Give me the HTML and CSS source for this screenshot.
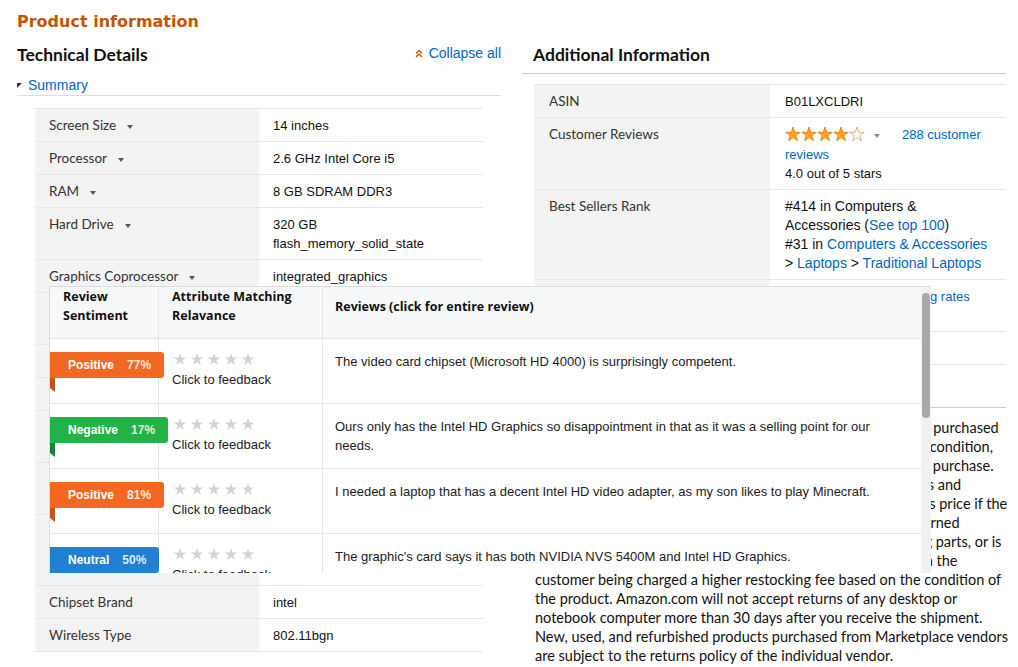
FILE: index.html
```html
<!DOCTYPE html>
<html lang="en">
<head>
<meta charset="utf-8">
<title>Product information</title>
<link rel="stylesheet" href="styles.css">
</head>
<body>
<svg class="defs" width="0" height="0" aria-hidden="true">
  <defs>
    <symbol id="star" viewBox="0 0 16 16">
      <path d="M8 1 L9.7 6.25 L15.23 6.25 L10.76 9.5 L12.47 14.75 L8 11.5 L3.53 14.75 L5.24 9.5 L0.77 6.25 L6.3 6.25 Z"/>
    </symbol>
  </defs>
</svg>
<div class="page">
  <h2 class="pi-title">Product information</h2>
  <div class="cols">
    <section class="col">
      <div class="sec-head">
        <h3 class="sec-title">Technical Details</h3>
        <a class="collapse" href="#"><svg class="chev" width="8" height="9" viewBox="0 0 8 9"><polyline points="1,4.5 4,1.5 7,4.5"/><polyline points="1,8 4,5 7,8"/></svg>Collapse all</a>
      </div>
      <div class="summary"><svg class="tri" width="5" height="5" viewBox="0 0 5 5"><polygon points="0,0 5,0 0,5"/></svg><a href="#">Summary</a></div>
      <table class="specs tech">
        <tr><td class="lbl">Screen Size<span class="caret"></span></td><td>14 inches</td></tr>
        <tr><td class="lbl">Processor<span class="caret"></span></td><td>2.6 GHz Intel Core i5</td></tr>
        <tr><td class="lbl">RAM<span class="caret"></span></td><td>8 GB SDRAM DDR3</td></tr>
        <tr><td class="lbl">Hard Drive<span class="caret"></span></td><td>320 GB<br>flash_memory_solid_state</td></tr>
        <tr><td class="lbl">Graphics Coprocessor<span class="caret"></span></td><td>integrated_graphics</td></tr>
        <tr><td class="lbl">Graphics Card Description</td><td>Integrated<br>Intel HD Graphics 4000</td></tr>
        <tr><td class="lbl">Graphics Card Ram Size</td><td>1 GB</td></tr>
        <tr><td class="lbl">Number of USB 3.0 Ports</td><td>2</td></tr>
        <tr><td class="lbl">Optical Drive</td><td>DVD-RW<br>Super Multi</td></tr>
        <tr><td class="lbl">Operating System</td><td>Windows 10<br>Professional 64-bit</td></tr>
        <tr class="tall"><td class="lbl">Included Components</td><td>AC adapter<br>Battery</td></tr>
        <tr><td class="lbl">Chipset Brand</td><td>intel</td></tr>
        <tr><td class="lbl">Wireless Type</td><td>802.11bgn</td></tr>
      </table>
    </section>
    <section class="col">
      <h3 class="sec-title ruled">Additional Information</h3>
      <table class="specs add">
        <tr><td class="lbl">ASIN</td><td>B01LXCLDRI</td></tr>
        <tr><td class="lbl">Customer Reviews</td><td>
          <div class="rating-line"><svg class="rating" width="80" height="16" viewBox="0 0 80 16">
            <use href="#star" x="0" y="0" width="16" height="16" class="full"/>
            <use href="#star" x="16" y="0" width="16" height="16" class="full"/>
            <use href="#star" x="32" y="0" width="16" height="16" class="full"/>
            <use href="#star" x="48" y="0" width="16" height="16" class="full"/>
            <use href="#star" x="64" y="0" width="16" height="16" class="empty"/>
          </svg><span class="caret small"></span><a class="rev-link" href="#">288 customer</a></div>
          <div><a href="#">reviews</a></div>
          <div>4.0 out of 5 stars</div>
        </td></tr>
        <tr><td class="lbl">Best Sellers Rank</td><td class="big">#414 in Computers &amp;<br>Accessories (<a href="#">See top 100</a>)<br>#31 in <a href="#">Computers &amp; Accessories</a><br>&gt; <a href="#">Laptops</a> &gt; <a href="#">Traditional Laptops</a></td></tr>
        <tr><td class="lbl">Shipping Weight</td><td>4.6 pounds (<a href="#">View shipping rates</a><br><a href="#">and policies</a>)</td></tr>
        <tr><td class="lbl">Date First Available</td><td>September 5, 2016</td></tr>
      </table>
      <h3 class="sec-title ruled warranty">Warranty &amp; Support</h3>
      <p class="policy">Amazon.com Return Policy: You may return any new computer purchased<br>from Amazon.com that is "dead on arrival," arrives in damaged condition,<br>or is still in unopened boxes, for a full refund within 30 days of purchase.<br>Amazon.com reserves the right to test "dead on arrival" returns and<br>impose a customer fee equal to 15 percent of the product sales price if the<br>customer misrepresents the condition of the product. Any returned<br>computer that is damaged through customer misuse, is missing parts, or is<br>in unsellable condition due to customer tampering will result in the<br>customer being charged a higher restocking fee based on the condition of<br>the product. Amazon.com will not accept returns of any desktop or<br>notebook computer more than 30 days after you receive the shipment.<br>New, used, and refurbished products purchased from Marketplace vendors<br>are subject to the returns policy of the individual vendor.</p>
    </section>
  </div>

  <div class="popup">
    <div class="rv">
      <div class="rv-head">
        <div class="c1">Review Sentiment</div>
        <div class="c2">Attribute Matching Relavance</div>
        <div class="c3">Reviews (click for entire review)</div>
      </div>
      <div class="rv-row">
        <div class="c1"><span class="badge pos"><b>Positive</b><i>77%</i></span></div>
        <div class="c2"><div class="fstars"><svg width="14" height="14"><use href="#star"/></svg><svg width="14" height="14"><use href="#star"/></svg><svg width="14" height="14"><use href="#star"/></svg><svg width="14" height="14"><use href="#star"/></svg><svg width="14" height="14"><use href="#star"/></svg></div><div class="fb">Click to feedback</div></div>
        <div class="c3">The video card chipset (Microsoft HD 4000) is surprisingly competent.</div>
      </div>
      <div class="rv-row">
        <div class="c1"><span class="badge neg"><b>Negative</b><i>17%</i></span></div>
        <div class="c2"><div class="fstars"><svg width="14" height="14"><use href="#star"/></svg><svg width="14" height="14"><use href="#star"/></svg><svg width="14" height="14"><use href="#star"/></svg><svg width="14" height="14"><use href="#star"/></svg><svg width="14" height="14"><use href="#star"/></svg></div><div class="fb">Click to feedback</div></div>
        <div class="c3">Ours only has the Intel HD Graphics so disappointment in that as it was a selling point for our needs.</div>
      </div>
      <div class="rv-row">
        <div class="c1"><span class="badge pos"><b>Positive</b><i>81%</i></span></div>
        <div class="c2"><div class="fstars"><svg width="14" height="14"><use href="#star"/></svg><svg width="14" height="14"><use href="#star"/></svg><svg width="14" height="14"><use href="#star"/></svg><svg width="14" height="14"><use href="#star"/></svg><svg width="14" height="14"><use href="#star"/></svg></div><div class="fb">Click to feedback</div></div>
        <div class="c3">I needed a laptop that has a decent Intel HD video adapter, as my son likes to play Minecraft.</div>
      </div>
      <div class="rv-row">
        <div class="c1"><span class="badge neu"><b>Neutral</b><i>50%</i></span></div>
        <div class="c2"><div class="fstars"><svg width="14" height="14"><use href="#star"/></svg><svg width="14" height="14"><use href="#star"/></svg><svg width="14" height="14"><use href="#star"/></svg><svg width="14" height="14"><use href="#star"/></svg><svg width="14" height="14"><use href="#star"/></svg></div><div class="fb">Click to feedback</div></div>
        <div class="c3">The graphic's card says it has both NVIDIA NVS 5400M and Intel HD Graphics.</div>
      </div>
    </div>
    <div class="sbar"><div class="thumb"></div></div>
  </div>
</div>
</body>
</html>
```
FILE: styles.css
```css
* { box-sizing: border-box; }
html, body { margin: 0; padding: 0; background: #fff; }
body {
  font-family: "Liberation Sans", Arial, sans-serif;
  font-size: 13px;
  color: #111;
}
a { color: #0066c0; text-decoration: none; }
.defs { position: absolute; width: 0; height: 0; overflow: hidden; }

.page {
  position: relative;
  width: 1018px;
  height: 667px;
  overflow: hidden;
  padding: 12px 0 0 17px;
}
.pi-title {
  margin: 0;
  font-family: "DejaVu Sans", Verdana, sans-serif;
  font-weight: bold;
  font-size: 16px;
  line-height: 20px;
  color: #c45500;
}
.cols { display: flex; gap: 21px; margin-top: 12px; }
.col { width: 484px; flex: none; }

.sec-head { display: flex; justify-content: space-between; align-items: flex-start; }
.sec-title {
  margin: 0;
  font-family: Lato, "Open Sans", sans-serif;
  font-weight: 700;
  font-size: 17.5px;
  line-height: 22px;
  color: #111;
}
.sec-title.ruled { padding: 0 0 7px 11px; border-bottom: 1px solid #ccc; }
.sec-title.warranty { margin-top: 13px; }

.collapse { display: flex; align-items: center; gap: 6px; font-size: 14px; line-height: 19px; }
.chev polyline { fill: none; stroke: #c45500; stroke-width: 1.3; }

.summary {
  margin-top: 10px;
  height: 20px;
  display: flex;
  align-items: center;
  gap: 6px;
  font-size: 14px;
  line-height: 19px;
  border-bottom: 1px solid #ddd;
}
.tri polygon { fill: #333; }

.specs { border-collapse: collapse; table-layout: fixed; }
.specs td {
  border-top: 1px solid #e7e7e7;
  padding: 7px 14px 6px;
  line-height: 19px;
  vertical-align: top;
  color: #111;
}
.specs tr.tall td { padding-bottom: 25px; }
.specs tr:last-child td { border-bottom: 1px solid #e7e7e7; }
.specs td.lbl {
  background: #f3f3f3;
  font-family: Lato, "Open Sans", sans-serif;
  font-size: 13.5px;
  color: #333;
}
.tech { margin: 12px 0 0 18px; width: 448px; }
.tech td { width: 224px; }
.add { margin: 10px 0 0 12px; width: 472px; }
.add td { width: 236px; padding-left: 15px; }
.specs td.big { font-size: 14px; white-space: nowrap; }

.caret {
  display: inline-block;
  width: 0; height: 0;
  border-left: 3.5px solid transparent;
  border-right: 3.5px solid transparent;
  border-top: 4px solid #555;
  margin-left: 11px;
  vertical-align: middle;
}
.caret.small { margin: 0 0 0 9px; border-top-color: #888; }
.rating-line { line-height: 20px; white-space: nowrap; }
.rating { vertical-align: -3px; }
.rating .full { fill: #ffa41c; stroke: #e47911; stroke-width: 0.8; }
.rating .empty { fill: #fff; stroke: #d3a35c; stroke-width: 0.8; }
.rev-link { margin-left: 22px; }

.policy {
  margin: 10px 0 0 13px;
  font-family: Lato, "Open Sans", sans-serif;
  font-size: 14.5px;
  line-height: 19px;
  color: #111;
  white-space: nowrap;
}

/* Review popup overlay */
.popup {
  position: absolute;
  left: 49px;
  top: 286px;
  width: 882px;
  height: 287px;
  display: flex;
  background: #fff;
  border-top: 1px solid #ddd;
  border-left: 1px solid #ddd;
}
.rv { flex: 1; overflow: hidden; }
.rv-head, .rv-row { display: grid; grid-template-columns: 108px 164px 1fr; }
.rv-head {
  height: 51px;
  background: #f7f8fa;
  font-family: "Open Sans", Lato, sans-serif;
  font-weight: 700;
  font-size: 12.5px;
  line-height: 19px;
  color: #111;
}
.rv-head > div { padding: 0 13px 13px; }
.rv-head > .c3 { display: flex; align-items: center; padding-left: 12px; }
.rv-row { height: 65px; border-top: 1px solid #e6e6e6; }
.c2, .c3 { border-left: 1px solid #e6e6e6; }
.rv-row .c1 { padding-top: 13px; }
.rv-row .c2 { padding: 13px 13px 0; }
.rv-row .c3 { padding: 13px 20px 0 12px; line-height: 19px; color: #222; }

.badge {
  position: relative;
  display: inline-flex;
  align-items: center;
  gap: 13px;
  height: 26px;
  padding: 0 13px 0 18px;
  border-radius: 0 3px 3px 0;
  color: #fff;
  font-family: "Liberation Sans", Arial, sans-serif;
  font-weight: bold;
  font-size: 12px;
  white-space: nowrap;
}
.badge b { font-weight: bold; }
.badge i { font-style: normal; color: rgba(255,255,255,0.85); }
.badge::after {
  content: "";
  position: absolute;
  left: 0;
  top: 26px;
  width: 5px;
  height: 14px;
  clip-path: polygon(0 0, 100% 0, 100% 100%, 0 72%);
}
.badge.pos { background: #f26722; }
.badge.pos::after { background: #c4501a; }
.badge.neg { background: #22b245; }
.badge.neg::after { background: #168235; }
.badge.neu { background: #2280d2; }
.badge.neu::after { background: #175f9e; }

.fstars { display: flex; gap: 3px; height: 14px; margin: 0 0 4px 1px; }
.fstars svg { fill: #d3d3d3; }
.fb { line-height: 19px; color: #222; }

.sbar { width: 10px; flex: none; background: #f1f1f1; padding: 6px 1px 0; }
.thumb { height: 125px; background: #a9a9a9; border-radius: 4px; }
```
